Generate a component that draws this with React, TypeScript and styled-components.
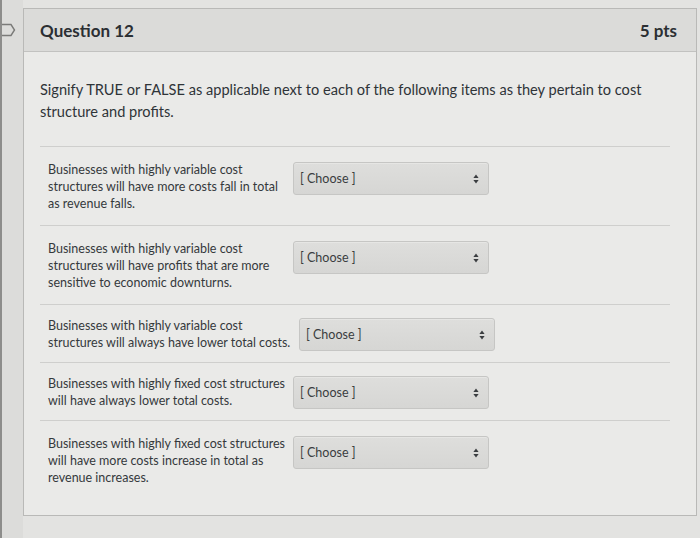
import styled, { createGlobalStyle } from 'styled-components';

const GlobalStyle = createGlobalStyle`
  html, body {
    margin: 0;
    padding: 0;
    background: #e3e3e1;
    font-family: Lato, "Open Sans", sans-serif;
    color: #2d3b45;
  }
`;

const Page = styled.div`
  display: flex;
  width: 700px;
  height: 538px;
  overflow: hidden;
  background: #e3e3e1;
`;

const Gutter = styled.div`
  width: 23px;
  flex-shrink: 0;
  border-left: 2px solid #8d8d8b;
  background: #dcdcda;
  padding-top: 22px;
  box-sizing: border-box;
`;

const Card = styled.div`
  margin-top: 8px;
  width: 674px;
  height: 508px;
  border: 1px solid #b9b9b7;
  background: #eaeae8;
  box-sizing: border-box;
  display: flex;
  flex-direction: column;
`;

const Header = styled.div`
  height: 42px;
  flex-shrink: 0;
  display: flex;
  align-items: center;
  justify-content: space-between;
  padding: 0 19px 0 16px;
  background: #dbdbd9;
  border-bottom: 1px solid #c2c2c0;
`;

const Title = styled.div`
  font-size: 17px;
  font-weight: 700;
  color: #2b2f33;
`;

const Points = styled.div`
  font-size: 17px;
  font-weight: 700;
  color: #2b2f33;
`;

const Body = styled.div`
  padding: 27px 26px 0 16px;
`;

const Prompt = styled.p`
  margin: 0 0 23px;
  font-size: 14.6px;
  line-height: 22px;
  color: #2f3438;
`;

const Rows = styled.div`
  border-top: 1px solid #cfcfcd;
`;

const Row = styled.div<{ $tall: boolean; $textWidth: number }>`
  display: grid;
  grid-template-columns: ${(p) => p.$textWidth}px 196px;
  column-gap: 6px;
  align-items: ${(p) => (p.$tall ? 'start' : 'center')};
  padding: ${(p) => (p.$tall ? '14px 0 13px 8px' : '12px 0 11px 8px')};
  border-bottom: 1px solid #cfcfcd;

  &:last-child {
    border-bottom: none;
  }
`;

const ItemText = styled.div`
  font-size: 12.5px;
  line-height: 17px;
  color: #35393c;
`;

const Select = styled.div`
  height: 33px;
  box-sizing: border-box;
  display: flex;
  align-items: center;
  justify-content: space-between;
  padding: 0 9px 0 6px;
  border: 1px solid #c6c6c4;
  border-radius: 3px;
  background: linear-gradient(#dededc, #d6d6d4);
  box-shadow: inset 0 1px 0 #e6e6e4;
  font-size: 12.5px;
  color: #3a3d40;
  margin-top: 1px;
`;

function Tag() {
  return (
    <svg width="14" height="16" viewBox="0 0 14 16">
      <path d="M0 2.5 H9 L12.5 8 L9 13.5 H0" fill="none" stroke="#7a7a78" strokeWidth="1.4" />
    </svg>
  );
}

function Arrows() {
  return (
    <svg width="6" height="10" viewBox="0 0 6 10">
      <path d="M3 0.5 L5.6 4 H0.4 Z" fill="#3a3d40" />
      <path d="M3 9.5 L5.6 6 H0.4 Z" fill="#3a3d40" />
    </svg>
  );
}

const items = [
  { text: 'Businesses with highly variable cost structures will have more costs fall in total as revenue falls.', tall: true, width: 239 },
  { text: 'Businesses with highly variable cost structures will have profits that are more sensitive to economic downturns.', tall: true, width: 239 },
  { text: 'Businesses with highly variable cost structures will always have lower total costs.', tall: false, width: 245 },
  { text: 'Businesses with highly fixed cost structures will have always lower total costs.', tall: false, width: 239 },
  { text: 'Businesses with highly fixed cost structures will have more costs increase in total as revenue increases.', tall: true, width: 239 },
];

export default function App() {
  return (
    <>
      <GlobalStyle />
      <Page>
        <Gutter>
          <Tag />
        </Gutter>
        <Card>
          <Header>
            <Title>Question 12</Title>
            <Points>5 pts</Points>
          </Header>
          <Body>
            <Prompt>
              Signify TRUE or FALSE as applicable next to each of the following items as they pertain to cost
              structure and profits.
            </Prompt>
            <Rows>
              {items.map((item, i) => (
                <Row key={i} $tall={item.tall} $textWidth={item.width}>
                  <ItemText>{item.text}</ItemText>
                  <Select>
                    <span>[ Choose ]</span>
                    <Arrows />
                  </Select>
                </Row>
              ))}
            </Rows>
          </Body>
        </Card>
      </Page>
    </>
  );
}
